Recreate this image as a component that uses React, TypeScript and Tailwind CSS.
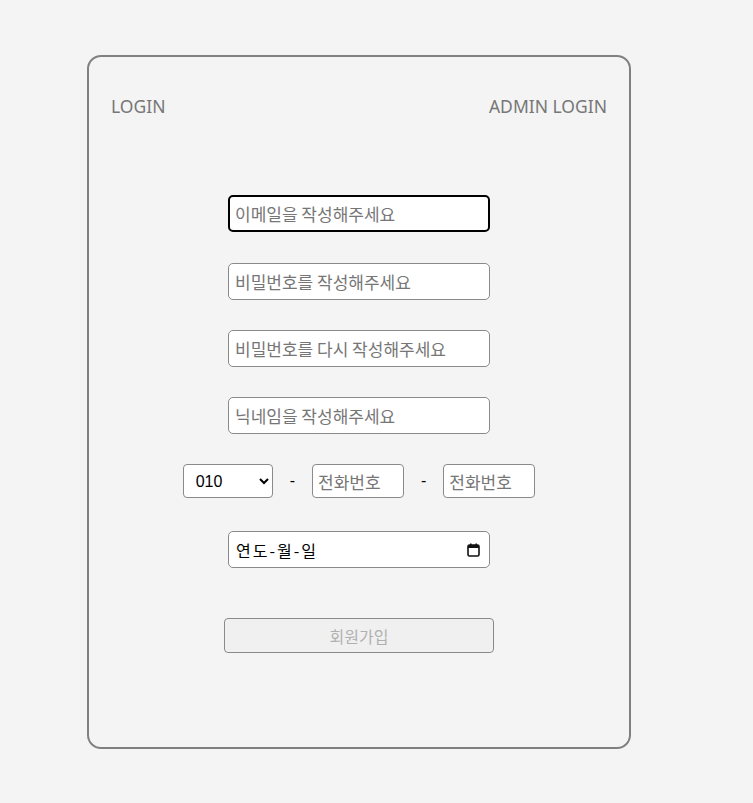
import React from 'react';

const field =
  'w-[262px] h-[37px] rounded-[5px] border border-[#8a8a8a] bg-white px-[6px] text-[17px] text-black outline-none placeholder:text-[#767676]';

const phone =
  'w-[92px] h-[34px] rounded-[4px] border border-[#8a8a8a] bg-white px-[5px] text-[17px] outline-none placeholder:text-[#767676]';

function CalendarIcon() {
  return (
    <svg width="13" height="14" viewBox="0 0 13 14" fill="none">
      <rect x="1" y="2" width="11" height="11" rx="1.5" stroke="#111" strokeWidth="1.6" />
      <rect x="1" y="2" width="11" height="3" fill="#111" />
      <rect x="3" y="0.5" width="1.6" height="3" fill="#111" />
      <rect x="8.4" y="0.5" width="1.6" height="3" fill="#111" />
    </svg>
  );
}

export default function App() {
  return (
    <div
      className="min-h-[803px] w-full bg-[#f4f4f4] pt-[55px] pl-[87px] pb-[55px]"
      style={{ fontFamily: '"Noto Sans", "Noto Sans CJK KR", sans-serif' }}
    >
      <div className="w-[544px] h-[694px] rounded-[14px] border-2 border-[#808080] flex flex-col items-center">
        {/* Header */}
        <div className="w-full flex justify-between px-[22px] pt-[37px] text-[17.5px] leading-[24px] text-[#777]">
          <span>LOGIN</span>
          <span>ADMIN LOGIN</span>
        </div>

        {/* Form */}
        <div className="mt-[77px] flex flex-col items-center" style={{ fontFamily: '"Noto Sans CJK KR", sans-serif' }}>
          <input
            className="w-[262px] h-[37px] rounded-[5px] border-2 border-black bg-white px-[5px] text-[17px] outline-none placeholder:text-[#767676]"
            placeholder="이메일을 작성해주세요"
          />
          <input type="password" className={`${field} mt-[31px]`} placeholder="비밀번호를 작성해주세요" />
          <input type="password" className={`${field} mt-[30px]`} placeholder="비밀번호를 다시 작성해주세요" />
          <input className={`${field} mt-[30px]`} placeholder="닉네임을 작성해주세요" />

          <div className="mt-[30px] flex items-center">
            <select
              defaultValue="010"
              className="w-[90px] h-[34px] rounded-[4px] border border-[#8a8a8a] bg-white pl-[8px] text-[16px] text-black"
              style={{ fontFamily: '"Liberation Sans", Arial, sans-serif' }}
            >
              <option value="010">010</option>
              <option value="011">011</option>
              <option value="016">016</option>
            </select>
            <span className="mx-[17px] text-[16px] text-black" style={{ fontFamily: '"Liberation Sans", Arial, sans-serif' }}>-</span>
            <input className={phone} placeholder="전화번호" />
            <span className="mx-[17px] text-[16px] text-black" style={{ fontFamily: '"Liberation Sans", Arial, sans-serif' }}>-</span>
            <input className={phone} placeholder="전화번호" />
          </div>

          <div className="mt-[33px] w-[262px] h-[37px] rounded-[5px] border border-[#8a8a8a] bg-white pl-[7px] pr-[9px] flex items-center justify-between">
            <span className="text-[16px] text-black tracking-[2px]">연도-월-일</span>
            <CalendarIcon />
          </div>

          <button
            disabled
            className="mt-[50px] w-[270px] h-[35px] rounded-[4px] border border-[#8a8a8a] bg-[#f0f0f0] text-[16px] text-[#b0b0b0]"
          >
            회원가입
          </button>
        </div>
      </div>
    </div>
  );
}
